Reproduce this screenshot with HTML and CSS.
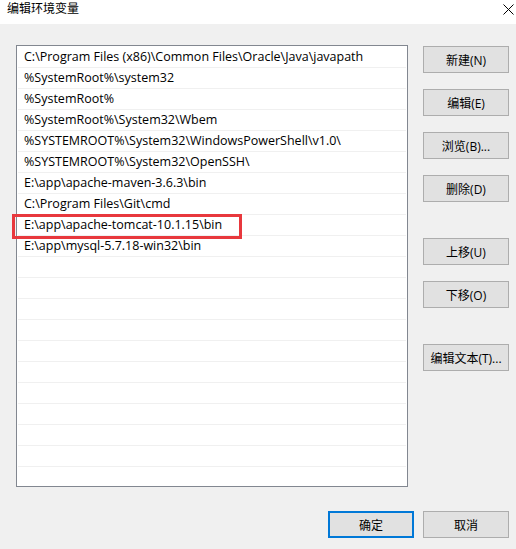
FILE: index.html
```html
<!DOCTYPE html>
<html lang="zh-CN">
<head>
    <meta charset="UTF-8">
    <meta name="viewport" content="width=device-width, initial-scale=1.0">
    <title>编辑环境变量</title>
    <link rel="stylesheet" href="styles.css">
</head>
<body>
    <div class="dialog">
        <!-- Title bar -->
        <div class="titlebar">
            <span class="title">编辑环境变量</span>
            <svg class="close" width="11" height="11" viewBox="0 0 11 11">
                <path d="M0.5 0.5 L10.5 10.5 M10.5 0.5 L0.5 10.5" stroke="#000" stroke-width="1" fill="none"/>
            </svg>
        </div>

        <!-- Path list + side buttons -->
        <div class="content">
            <div class="list">
                <div class="row">C:\Program Files (x86)\Common Files\Oracle\Java\javapath</div>
                <div class="row">%SystemRoot%\system32</div>
                <div class="row">%SystemRoot%</div>
                <div class="row">%SystemRoot%\System32\Wbem</div>
                <div class="row">%SYSTEMROOT%\System32\WindowsPowerShell\v1.0\</div>
                <div class="row">%SYSTEMROOT%\System32\OpenSSH\</div>
                <div class="row">E:\app\apache-maven-3.6.3\bin</div>
                <div class="row">C:\Program Files\Git\cmd</div>
                <div class="row">E:\app\apache-tomcat-10.1.15\bin</div>
                <div class="row">E:\app\mysql-5.7.18-win32\bin</div>
                <div class="row"></div>
                <div class="row"></div>
                <div class="row"></div>
                <div class="row"></div>
                <div class="row"></div>
                <div class="row"></div>
                <div class="row"></div>
                <div class="row"></div>
                <div class="row"></div>
                <div class="row"></div>
                <div class="row"></div>
            </div>
            <div class="side">
                <button class="btn">新建(N)</button>
                <button class="btn">编辑(E)</button>
                <button class="btn">浏览(B)...</button>
                <button class="btn">删除(D)</button>
                <button class="btn group">上移(U)</button>
                <button class="btn">下移(O)</button>
                <button class="btn group">编辑文本(T)...</button>
            </div>
        </div>

        <!-- Dialog buttons -->
        <div class="footer">
            <button class="btn default">确定</button>
            <button class="btn">取消</button>
        </div>

        <!-- annotation -->
        <div class="mark"></div>
    </div>
</body>
</html>
```

FILE: styles.css
```css
body {
    margin: 0;
    background-color: #f0f0f0;
    font-family: "Open Sans", "Noto Sans CJK SC", sans-serif;
    font-size: 12px;
    color: #000;
}
.dialog {
    position: relative;
    width: 516px;
    height: 549px;
    display: flex;
    flex-direction: column;
}
.titlebar {
    height: 24px;
    background-color: #fff;
    display: flex;
    justify-content: space-between;
    align-items: flex-start;
    padding: 1px 2px 0 7px;
    box-sizing: border-box;
}
.title {
    line-height: 16px;
}
.close {
    margin-top: 3px;
}
.content {
    display: flex;
    gap: 15px;
    padding: 21px 7px 0 16px;
}
.list {
    width: 392px;
    height: 442px;
    box-sizing: border-box;
    border: 1px solid #828790;
    background-color: #fff;
    padding: 1px;
    overflow: hidden;
}
.row {
    height: 20px;
    line-height: 20px;
    font-size: 12.5px;
    border-bottom: 1px solid #f0f0f0;
    padding-left: 6px;
    white-space: nowrap;
}
.side {
    display: flex;
    flex-direction: column;
    gap: 16px;
    padding-top: 1px;
}
.btn {
    width: 86px;
    height: 27px;
    padding: 0;
    background-color: #e1e1e1;
    border: 1px solid #adadad;
    font-family: "Open Sans", "Noto Sans CJK SC", sans-serif;
    font-size: 12px;
    color: #000;
}
.btn.group {
    margin-top: 20px;
}
.btn.default {
    border: 2px solid #0078d7;
}
.footer {
    display: flex;
    justify-content: flex-end;
    gap: 9px;
    padding: 24px 7px 0 0;
}
.mark {
    position: absolute;
    left: 12px;
    top: 214px;
    width: 230px;
    height: 25px;
    box-sizing: border-box;
    border: 3px solid #e8383d;
}
```
